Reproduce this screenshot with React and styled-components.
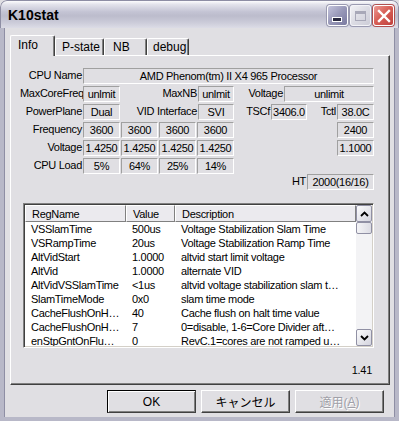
import React from 'react';
import styled, { createGlobalStyle } from 'styled-components';

const Global = createGlobalStyle`
    html, body { margin: 0; padding: 0; background: #e0dfe3; }
    body { font-family: "Liberation Sans", Arial, sans-serif; font-size: 11px; letter-spacing: -0.3px; color: #000; }
    * { box-sizing: border-box; }
`;

const rows = [
    ['VSSlamTime', '500us', 'Voltage Stabilization Slam Time'],
    ['VSRampTime', '20us', 'Voltage Stabilization Ramp Time'],
    ['AltVidStart', '1.0000', 'altvid start limit voltage'],
    ['AltVid', '1.0000', 'alternate VID'],
    ['AltVidVSSlamTime', '<1us', 'altvid voltage stabilization slam t…'],
    ['SlamTimeMode', '0x0', 'slam time mode'],
    ['CacheFlushOnH…', '40', 'Cache flush on halt time value'],
    ['CacheFlushOnH…', '7', '0=disable, 1-6=Core Divider aft…'],
    ['enStpGntOnFlu…', '0', 'RevC.1=cores are not ramped u…'],
];

export default function App() {
    return (
        <>
        <Global />
        <Window>
            <TitleBar>
                <Title>K10stat</Title>
                <Caps>
                    <CapButton kind="min"><MinGlyph /></CapButton>
                    <CapButton kind="max"><MaxGlyph /></CapButton>
                    <CapButton kind="close">
                        <svg width="14" height="14" viewBox="0 0 14 14">
                            <path d="M2 2 L12 12 M12 2 L2 12" stroke="#fff" strokeWidth="2.4" strokeLinecap="square" />
                        </svg>
                    </CapButton>
                </Caps>
            </TitleBar>
            <Body>
                <Tabs>
                    <Tab active w={45} pad={7}>Info</Tab>
                    <Tab w={49} pad={6}>P-state</Tab>
                    <Tab w={43} pad={8}>NB</Tab>
                    <Tab w={42} pad={5}>debug</Tab>
                </Tabs>
                <Panel>
                    <Info>
                        <Row>
                            <Label w={63}>CPU Name</Label>
                            <Field w={291}>AMD Phenom(tm) II X4 965 Processor</Field>
                        </Row>
                        <Row>
                            <Label w={63}>MaxCoreFreq</Label>
                            <Field w={37}>unlmit</Field>
                            <Label w={78}>MaxNB</Label>
                            <Field w={36}>unlmit</Field>
                            <Label w={50}>Voltage</Label>
                            <Field w={90}>unlimit</Field>
                        </Row>
                        <Row>
                            <Label w={63}>PowerPlane</Label>
                            <Field w={37}>Dual</Field>
                            <Label w={78}>VID Interface</Label>
                            <Field w={36}>SVI</Field>
                            <Label w={37}>TSCf</Label>
                            <Field w={36}>3406.0</Field>
                            <Label w={30}>Tctl</Label>
                            <Field w={37}>38.0C</Field>
                        </Row>
                        <Row>
                            <Label w={63}>Frequency</Label>
                            <Cores>{['3600', '3600', '3600', '3600'].map((v, i) => <Field key={i} w={37}>{v}</Field>)}</Cores>
                            <Spacer />
                            <Field w={37}>2400</Field>
                        </Row>
                        <Row>
                            <Label w={63}>Voltage</Label>
                            <Cores>{['1.4250', '1.4250', '1.4250', '1.4250'].map((v, i) => <Field key={i} w={37}>{v}</Field>)}</Cores>
                            <Spacer />
                            <Field w={37}>1.1000</Field>
                        </Row>
                        <Row>
                            <Label w={63}>CPU Load</Label>
                            <Cores>{['5%', '64%', '25%', '14%'].map((v, i) => <Field key={i} w={37}>{v}</Field>)}</Cores>
                        </Row>
                        <Row end>
                            <Label w={20}>HT</Label>
                            <Field w={67}>2000(16/16)</Field>
                        </Row>
                    </Info>
                    <ListView>
                        <Table>
                            <Header>
                                <HeadCell w={101}>RegName</HeadCell>
                                <HeadCell w={49}>Value</HeadCell>
                                <HeadCell w={181}>Description</HeadCell>
                            </Header>
                            {rows.map((r, i) => (
                                <ListRow key={i}>
                                    <Cell w={101}>{r[0]}</Cell>
                                    <Cell w={49}>{r[1]}</Cell>
                                    <Cell w={181}>{r[2]}</Cell>
                                </ListRow>
                            ))}
                        </Table>
                        <ScrollBar>
                            <ScrollButton>
                                <svg width="9" height="6" viewBox="0 0 9 6"><path d="M1 5 L4.5 1.5 L8 5" fill="none" stroke="#000" strokeWidth="1.8" /></svg>
                            </ScrollButton>
                            <Thumb />
                            <div />
                            <ScrollButton>
                                <svg width="9" height="6" viewBox="0 0 9 6"><path d="M1 1 L4.5 4.5 L8 1" fill="none" stroke="#000" strokeWidth="1.8" /></svg>
                            </ScrollButton>
                        </ScrollBar>
                    </ListView>
                    <Version>1.41</Version>
                </Panel>
                <Buttons>
                    <PushButton isDefault>OK</PushButton>
                    <PushButton>キャンセル</PushButton>
                    <PushButton disabled>適用(<u>A</u>)</PushButton>
                </Buttons>
            </Body>
        </Window>
        </>
    );
}

const Window = styled.div`
    width: 399px;
    height: 421px;
    display: flex;
    flex-direction: column;
    overflow: hidden;
    border-radius: 7px 7px 0 0;
    background: #e0dfe3;
`;
const TitleBar = styled.div`
    height: 28px;
    flex: none;
    display: flex;
    align-items: center;
    justify-content: space-between;
    padding: 0 6px 0 7px;
    border: 1px solid #8e8ea4;
    border-bottom: none;
    border-radius: 7px 7px 0 0;
    background: linear-gradient(#fdfdfe 0%, #e4e4ec 12%, #c4c4d4 40%, #bcbccc 55%, #cacad8 78%, #dcdce6 100%);
`;
const Title = styled.div`
    font-family: "Liberation Sans", Arial, sans-serif;
    font-weight: bold;
    font-size: 14px;
    letter-spacing: 0;
    color: #000;
    padding-top: 1px;
`;
const Caps = styled.div`
    display: flex;
    gap: 2px;
    padding-top: 2px;
    margin-right: -2px;
`;
const CapButton = styled.div`
    width: 21px;
    height: 21px;
    border-radius: 3px;
    border: 1px solid ${(p) => (p.kind === 'max' ? '#f4f4f8' : '#ffffff')};
    display: flex;
    align-items: center;
    justify-content: center;
    position: relative;
    background: ${(p) =>
        p.kind === 'close'
            ? 'linear-gradient(135deg, #ec9a94 0%, #d86058 45%, #c0403c 100%)'
            : p.kind === 'min'
            ? 'linear-gradient(135deg, #c4c4dc 0%, #9898b8 50%, #7a7aa0 100%)'
            : 'linear-gradient(135deg, #f0f0f4 0%, #dcdce4 50%, #cdcdd8 100%)'};
    box-shadow: 0 0 0 1px ${(p) => (p.kind === 'close' ? '#b05050' : '#9a9ab0')};
`;
const MinGlyph = styled.div`
    position: absolute;
    left: 5px;
    bottom: 4px;
    width: 8px;
    height: 3px;
    background: #2a2a40;
    box-shadow: 0 0 0 1px #ffffff;
`;
const MaxGlyph = styled.div`
    width: 11px;
    height: 10px;
    border: 1px solid #a8a8b8;
    border-top-width: 3px;
`;
const Body = styled.div`
    flex: 1;
    display: flex;
    flex-direction: column;
    padding: 7px 6px 0 6px;
    border-left: 4px solid #b8b8c8;
    border-right: 4px solid #b8b8c8;
    border-bottom: 4px solid #b8b8c8;
    box-shadow: inset 1px 0 #8e8ea4, inset -1px 0 #8e8ea4;
    background: #e0dfe3;
`;
const Tabs = styled.div`
    display: flex;
    align-items: flex-end;
    height: 20px;
    position: relative;
    z-index: 1;
`;
const Tab = styled.div`
    width: ${(p) => p.w}px;
    height: ${(p) => (p.active ? 21 : 17)}px;
    margin-bottom: ${(p) => (p.active ? -1 : 0)}px;
    padding-left: ${(p) => p.pad}px;
    padding-top: ${(p) => (p.active ? 2 : 1)}px;
    font-family: "Liberation Sans", Arial, sans-serif;
    font-size: 12px;
    letter-spacing: 0;
    line-height: 14px;
    background: #e0dfe3;
    border-top: 1px solid #ffffff;
    border-left: 1px solid #ffffff;
    border-right: 1px solid #404040;
    border-radius: 2px 2px 0 0;
    box-shadow: inset -1px 0 #808080;
`;
const Panel = styled.div`
    width: 380px;
    height: 330px;
    flex: none;
    padding: 12px 0 0 9px;
    background: #e0dfe3;
    border-top: 1px solid #ffffff;
    border-left: 1px solid #ffffff;
    border-right: 1px solid #404040;
    border-bottom: 1px solid #404040;
    box-shadow: inset -1px -1px #808080;
`;
const Info = styled.div`
    width: 354px;
    display: flex;
    flex-direction: column;
    gap: 2px;
`;
const Row = styled.div`
    display: flex;
    height: 16px;
    justify-content: ${(p) => (p.end ? 'flex-end' : 'flex-start')};
    margin-top: ${(p) => (p.end ? -2 : 0)}px;
`;
const Label = styled.div`
    width: ${(p) => p.w}px;
    text-align: right;
    padding-right: 1px;
    white-space: nowrap;
    line-height: 15px;
`;
const Field = styled.div`
    width: ${(p) => p.w}px;
    height: 16px;
    text-align: center;
    white-space: nowrap;
    line-height: 14px;
    border-top: 1px solid #a0a0a0;
    border-left: 1px solid #a0a0a0;
    border-right: 1px solid #ffffff;
    border-bottom: 1px solid #ffffff;
`;
const Cores = styled.div`
    display: flex;
    gap: 1px;
`;
const Spacer = styled.div`
    flex: 1;
`;
const ListView = styled.div`
    margin: 13px 0 0 3px;
    width: 351px;
    height: 145px;
    display: grid;
    grid-template-columns: 331px 16px;
    grid-template-rows: 141px;
    background: #ffffff;
    border-top: 1px solid #808080;
    border-left: 1px solid #808080;
    border-right: 1px solid #ffffff;
    border-bottom: 1px solid #ffffff;
    box-shadow: inset 1px 1px #404040, inset -1px -1px #d4d0c8;
    padding: 1px;
`;
const Table = styled.div`
    overflow: hidden;
`;
const Header = styled.div`
    display: flex;
    height: 17px;
    background: #ebeaee;
`;
const HeadCell = styled.div`
    width: ${(p) => p.w}px;
    flex: none;
    padding-left: 6px;
    line-height: 16px;
    border-top: 1px solid #ffffff;
    border-left: 1px solid #ffffff;
    border-right: 1px solid #808080;
    border-bottom: 1px solid #808080;
`;
const ListRow = styled.div`
    display: flex;
    height: 14px;
    line-height: 14px;
`;
const Cell = styled.div`
    width: ${(p) => p.w}px;
    flex: none;
    padding-left: 6px;
    white-space: nowrap;
`;
const ScrollBar = styled.div`
    display: grid;
    grid-template-rows: 17px 12px 1fr 17px;
    background: #f3f3f5;
`;
const ScrollButton = styled.div`
    display: flex;
    align-items: center;
    justify-content: center;
    border: 1px solid #9090a4;
    border-radius: 2px;
    background: linear-gradient(135deg, #fbfbfc, #d4d4de);
`;
const Thumb = styled.div`
    border: 1px solid #9090a4;
    border-radius: 2px;
    background: linear-gradient(90deg, #f4f4f6, #dcdce4);
`;
const Version = styled.div`
    width: 354px;
    margin-top: 15px;
    text-align: right;
    padding-right: 2px;
    line-height: 14px;
`;
const Buttons = styled.div`
    display: flex;
    justify-content: flex-end;
    gap: 5px;
    padding-right: 5px;
    margin-top: 5px;
`;
const PushButton = styled.div`
    width: 89px;
    height: 23px;
    display: flex;
    align-items: center;
    justify-content: center;
    font-family: "Liberation Sans", "Noto Sans CJK JP", sans-serif;
    font-size: 12px;
    letter-spacing: 0;
    background: #e0dfe3;
    color: ${(p) => (p.disabled ? '#a0a0a8' : '#000')};
    text-shadow: ${(p) => (p.disabled ? '1px 1px #ffffff' : 'none')};
    border: 1px solid ${(p) => (p.isDefault ? '#000' : '#ffffff')};
    border-right-color: #404040;
    border-bottom-color: #404040;
    box-shadow: ${(p) =>
        p.isDefault
            ? 'inset 1px 1px #ffffff, inset -1px -1px #808080'
            : 'inset -1px -1px #808080'};
    u { text-decoration: underline; }
`;
